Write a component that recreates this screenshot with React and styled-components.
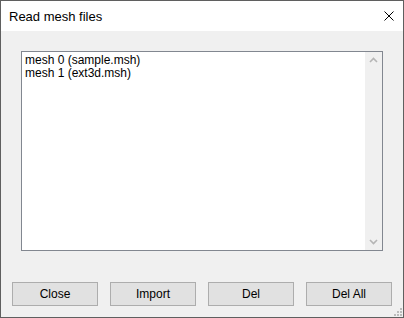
import React from "react";
import styled, { createGlobalStyle } from "styled-components";

const GlobalStyle = createGlobalStyle`
  html, body {
    margin: 0;
    padding: 0;
    background: #f0f0f0;
  }
  body {
    font-family: "Liberation Sans", Arial, sans-serif;
    font-size: 12px;
    color: #000;
  }
`;

const Window = styled.div`
  box-sizing: border-box;
  width: 404px;
  height: 318px;
  border: 1px solid #5f5f5f;
  display: flex;
  flex-direction: column;
  background: #f0f0f0;
`;

const TitleBar = styled.div`
  height: 30px;
  background: #fff;
  display: flex;
  align-items: center;
  justify-content: space-between;
  padding: 0 9px 0 8px;
  flex-shrink: 0;
`;

const Title = styled.span`
  font-size: 13px;
  margin-top: 1px;
`;

const CloseGlyph = styled.svg`
  width: 10px;
  height: 10px;
  display: block;
`;

const Body = styled.div`
  flex: 1;
  display: flex;
  flex-direction: column;
  padding: 20px 0 11px;
  position: relative;
`;

const ListBox = styled.div`
  box-sizing: border-box;
  margin: 0 20px;
  height: 200px;
  border: 1px solid #828790;
  background: #fff;
  display: flex;
`;

const Items = styled.div`
  flex: 1;
  padding: 2px 3px;
`;

const Item = styled.div`
  line-height: 13px;
  height: 13px;
  white-space: nowrap;
`;

const ScrollTrack = styled.div`
  width: 17px;
  background: #f0f0f0;
  display: flex;
  flex-direction: column;
  justify-content: space-between;
  align-items: center;
  padding: 5px 0;
  box-sizing: border-box;
`;

const Chevron = styled.svg`
  width: 9px;
  height: 6px;
  display: block;
`;

const ButtonRow = styled.div`
  margin-top: auto;
  padding: 0 11px;
  display: flex;
  gap: 12px;
`;

const Button = styled.button`
  box-sizing: border-box;
  width: 86px;
  height: 24px;
  background: #e1e1e1;
  border: 1px solid #adadad;
  font-family: "Liberation Sans", Arial, sans-serif;
  font-size: 12px;
  color: #000;
  padding: 0;
  border-radius: 0;
`;

const Grip = styled.svg`
  position: absolute;
  right: 1px;
  bottom: 1px;
  width: 9px;
  height: 9px;
`;

const files = ["mesh 0 (sample.msh)", "mesh 1 (ext3d.msh)"];
const buttons = ["Close", "Import", "Del", "Del All"];

export default function App() {
  return (
    <>
      <GlobalStyle />
      <Window>
        <TitleBar>
          <Title>Read mesh files</Title>
          <CloseGlyph viewBox="0 0 10 10">
            <path d="M0.5 0.5 L9.5 9.5 M9.5 0.5 L0.5 9.5" stroke="#000" strokeWidth="1" />
          </CloseGlyph>
        </TitleBar>
        <Body>
          <ListBox>
            <Items>
              {files.map((f) => (
                <Item key={f}>{f}</Item>
              ))}
            </Items>
            <ScrollTrack>
              <Chevron viewBox="0 0 9 6">
                <path d="M1 5 L4.5 1.5 L8 5" fill="none" stroke="#b5b5b5" strokeWidth="1.6" />
              </Chevron>
              <Chevron viewBox="0 0 9 6">
                <path d="M1 1 L4.5 4.5 L8 1" fill="none" stroke="#b5b5b5" strokeWidth="1.6" />
              </Chevron>
            </ScrollTrack>
          </ListBox>
          <ButtonRow>
            {buttons.map((b) => (
              <Button key={b}>{b}</Button>
            ))}
          </ButtonRow>
          <Grip viewBox="0 0 9 9">
            {[[7, 1], [7, 4], [4, 4], [7, 7], [4, 7], [1, 7]].map(([x, y]) => (
              <rect key={`${x}-${y}`} x={x} y={y} width="2" height="2" fill="#bcbcbc" />
            ))}
          </Grip>
        </Body>
      </Window>
    </>
  );
}
